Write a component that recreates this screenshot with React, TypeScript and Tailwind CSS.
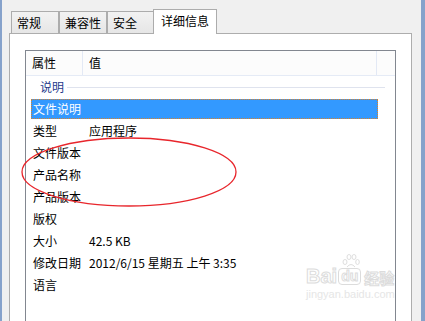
import React from "react";

const font = { fontFamily: '"Noto Sans CJK SC", "Microsoft YaHei", sans-serif' };

const rows: [string, string][] = [
  ["类型", "应用程序"],
  ["文件版本", ""],
  ["产品名称", ""],
  ["产品版本", ""],
  ["版权", ""],
  ["大小", "42.5 KB"],
  ["修改日期", "2012/6/15 星期五 上午 3:35"],
  ["语言", ""],
];

export default function App() {
  return (
    <div
      className="relative flex w-[425px] h-[321px] overflow-hidden bg-[#f0f0f0] text-[12px] leading-none text-black"
      style={font}
    >
      <div className="w-[2px] bg-[#86a2cb]" />
      <div className="flex flex-1 flex-col pl-[7px] pr-[9px]">
        {/* tabs */}
        <div className="flex h-[33px] items-end pl-[2px]">
          <div className="flex h-[22px] w-[48px] items-center border border-b-0 border-[#acacac] bg-gradient-to-b from-[#f2f2f2] to-[#e6e6e6] pl-[5px]">常规</div>
          <div className="flex h-[22px] w-[48px] items-center border border-b-0 border-[#acacac] bg-gradient-to-b from-[#f2f2f2] to-[#e6e6e6] pl-[5px]">兼容性</div>
          <div className="flex h-[22px] w-[47px] items-center border border-b-0 border-[#acacac] bg-gradient-to-b from-[#f2f2f2] to-[#e6e6e6] pl-[5px]">安全</div>
          <div className="relative z-10 -mb-px -ml-px flex h-[25px] w-[64px] items-center justify-center border border-b-0 border-[#acacac] bg-white pb-[2px]">详细信息</div>
        </div>
        {/* panel */}
        <div className="flex flex-1 flex-col border border-b-0 border-[#adadad] bg-white pl-[15px] pr-[15px] pt-[16px]">
          <div className="flex flex-1 flex-col border border-b-0 border-[#828790] bg-white">
            {/* header */}
            <div className="flex h-[25px] border-b border-[#e5ebf6] bg-[#fcfcfc]">
              <div className="flex w-[57px] items-center border-r border-[#e3e9f5] pl-[6px]">属性</div>
              <div className="flex w-[294px] items-center border-r border-[#e3e9f5] pl-[6px]">值</div>
              <div className="flex-1" />
            </div>
            {/* group */}
            <div className="flex h-[22px] items-center pl-[14px] pr-[10px]">
              <span className="text-[#1e3a8c]">说明</span>
              <div className="ml-[3px] h-px flex-1 bg-[#dfe3ee]" />
            </div>
            {/* selected row */}
            <div className="flex h-[22px] items-center pl-[5px]">
              <div className="flex h-[20px] w-[347px] items-center border border-dotted border-[#d9822b] bg-[#3399ff] pl-[1px] text-white">
                文件说明
              </div>
            </div>
            {rows.map(([k, v]) => (
              <div key={k} className="flex h-[22px] items-center">
                <div className="w-[63px] pl-[7px]">{k}</div>
                <div>{v}</div>
              </div>
            ))}
          </div>
        </div>
      </div>
      <div className="w-[4px] bg-[#86a2cb]" />

      {/* red annotation ellipse */}
      <svg className="absolute left-0 top-0 pointer-events-none" width="425" height="321">
        <ellipse cx="129" cy="172" rx="107" ry="34" fill="none" stroke="#e8262c" strokeWidth="1.3" />
      </svg>

      {/* watermark */}
      <div className="pointer-events-none absolute left-[306px] top-[266px] flex flex-col items-start">
        <div className="flex items-end" style={{ fontFamily: '"Liberation Sans", sans-serif' }}>
          <span className="text-[20px] font-bold leading-none text-white [-webkit-text-stroke:1px_#dcdcdc]">Bai</span>
          <span className="relative ml-[1px] mb-[1px] rounded-[4px] border border-[#dcdcdc] px-[2px] pb-[1px] text-[14px] font-bold leading-none text-white [-webkit-text-stroke:1px_#dcdcdc]">
            du
            <svg className="absolute -top-[15px] left-[3px]" width="18" height="14" viewBox="0 0 18 14">
              <g fill="none" stroke="#dedede" strokeWidth="1">
                <ellipse cx="3" cy="8" rx="2" ry="2.5" />
                <ellipse cx="7" cy="3" rx="2" ry="2.5" />
                <ellipse cx="12" cy="3" rx="2" ry="2.5" />
                <ellipse cx="15.5" cy="8" rx="1.8" ry="2.5" />
                <path d="M5 13 Q9 8 13 13" />
              </g>
            </svg>
          </span>
          <span className="ml-[3px] mb-[1px] text-[15px] font-bold leading-none text-white [-webkit-text-stroke:1px_#dcdcdc]" style={font}>经验</span>
        </div>
        <div className="mt-[3px] text-[11px] leading-none text-[#e6e6e6]" style={{ fontFamily: '"Liberation Sans", sans-serif' }}>
          jingyan.baidu.com
        </div>
      </div>
    </div>
  );
}
